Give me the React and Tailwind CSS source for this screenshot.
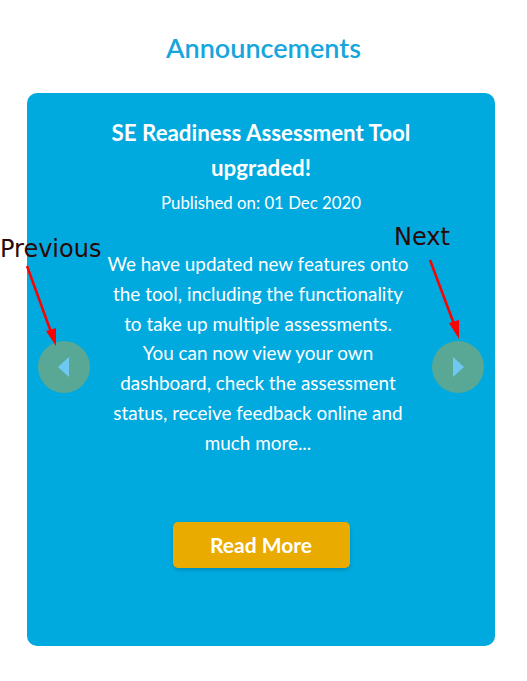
const bodyLines = [
  'We have updated new features onto',
  'the tool, including the functionality',
  'to take up multiple assessments.',
  'You can now view your own',
  'dashboard, check the assessment',
  'status, receive feedback online and',
  'much more...',
]

export default function App() {
  return (
    <div className="relative min-h-screen w-full bg-white font-['Lato',sans-serif] pb-9">
      <h2 className="pt-[30px] pb-[27px] text-center text-[27px] leading-[36px] font-semibold text-[#16a5dd]">
        Announcements
      </h2>

      {/* Card */}
      <div className="relative ml-[27px] w-[468px] rounded-[10px] bg-[#00aadf] pt-[22px] pb-[78px] flex flex-col items-center text-white text-center">
        <h3 className="w-[340px] text-[22.3px] leading-[35px] font-bold">
          SE Readiness Assessment Tool upgraded!
        </h3>
        <p className="mt-[6px] text-[16.8px] leading-[24px]">Published on: 01 Dec 2020</p>
        <p className="mt-[34px] pr-[6px] text-[18.9px] leading-[29.8px]">
          {bodyLines.map((l) => (
            <span key={l} className="block">{l}</span>
          ))}
        </p>
        <button className="mt-[64px] h-[46px] w-[177px] rounded-[5px] bg-[#eaab00] text-[21px] font-bold text-white shadow-[0_2px_4px_rgba(0,0,0,0.18)]">
          Read More
        </button>

        {/* Prev / Next */}
        <button className="absolute left-[11px] top-[248px] flex h-[52px] w-[52px] items-center justify-center rounded-full bg-[#58a895]">
          <svg width="12" height="20" viewBox="0 0 12 20">
            <path d="M11 0 L0 10 L11 20 Z" fill="#6fc8f2" />
          </svg>
        </button>
        <button className="absolute right-[11px] top-[248px] flex h-[52px] w-[52px] items-center justify-center rounded-full bg-[#58a895]">
          <svg width="12" height="20" viewBox="0 0 12 20">
            <path d="M1 0 L12 10 L1 20 Z" fill="#6fc8f2" />
          </svg>
        </button>
      </div>

      {/* Annotations */}
      <span className="absolute left-0 top-[234px] font-['DejaVu_Sans',sans-serif] text-[24px] leading-[30px] text-[#2a0808]">
        Previous
      </span>
      <span className="absolute left-[394px] top-[222px] font-['DejaVu_Sans',sans-serif] text-[24px] leading-[30px] text-[#2a0808]">
        Next
      </span>
      <svg className="pointer-events-none absolute left-0 top-0" width="527" height="681">
        <line x1="27" y1="266" x2="51" y2="332" stroke="#ff0000" strokeWidth="2.5" />
        <path d="M46 331 L56 346 L56 328 Z" fill="#ff0000" />
        <line x1="430" y1="260" x2="454" y2="324" stroke="#ff0000" strokeWidth="2.5" />
        <path d="M449 323 L459 339 L459 320 Z" fill="#ff0000" />
      </svg>
    </div>
  )
}
